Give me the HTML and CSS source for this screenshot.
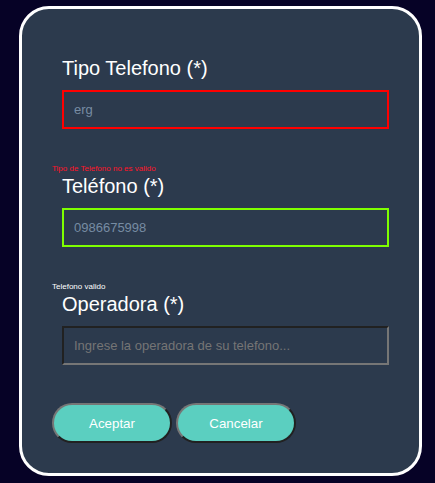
FILE: index.html
```html
<!DOCTYPE html>
<html lang="es">
<head>
<meta charset="utf-8">
<meta name="viewport" content="width=device-width, initial-scale=1">
<title>Teléfono</title>
<link rel="stylesheet" href="styles.css">
</head>
<body>
<form class="card">
  <div class="field">
    <label class="label" for="tipo">Tipo Telefono (*)</label>
    <input class="input invalid" id="tipo" type="text" value="erg">
    <p class="message error">Tipo de Telefono no es valido</p>
  </div>
  <div class="field">
    <label class="label" for="telefono">Teléfono (*)</label>
    <input class="input valid" id="telefono" type="text" value="0986675998">
    <p class="message">Telefono valido</p>
  </div>
  <div class="field">
    <label class="label" for="operadora">Operadora (*)</label>
    <input class="input" id="operadora" type="text" placeholder="Ingrese la operadora de su telefono...">
  </div>
  <div class="actions">
    <button class="button" type="submit">Aceptar</button>
    <button class="button" type="button">Cancelar</button>
  </div>
</form>
</body>
</html>
```

FILE: styles.css
```css
* {
  box-sizing: border-box;
}

body {
  margin: 0;
  padding: 6px 13px 7px 19px;
  background: #060226;
  color: #fff;
  font-family: "Liberation Sans", Arial, sans-serif;
}

.card {
  padding: 48px 30px 30px;
  border: 3px solid #fff;
  border-radius: 30px;
  background: #2c3a4d;
}

.field {
  display: flex;
  flex-direction: column;
}

.label {
  margin: 0 0 10px 10px;
  font-size: 20px;
  line-height: 23px;
}

.input {
  height: 39px;
  margin-left: 10px;
  padding: 0 10px;
  border: 2px inset #767676;
  border-radius: 0;
  background: transparent;
  color: #778ca3;
  font-family: inherit;
  font-size: 13px;
  outline: none;
}

.input::placeholder {
  color: #757575;
}

.invalid {
  border: 2px solid #f00;
}

.valid {
  border: 2px solid #7fff00;
}

.message {
  margin: 35px 0 2px;
  font-size: 8px;
  line-height: 9px;
}

.error {
  color: #ff1428;
}

.actions {
  display: flex;
  gap: 4px;
  margin-top: 38px;
}

.button {
  width: 120px;
  height: 40px;
  border: 2px outset #767676;
  border-radius: 20px;
  background: #5bcfc0;
  color: #fff;
  font-family: inherit;
}
```
